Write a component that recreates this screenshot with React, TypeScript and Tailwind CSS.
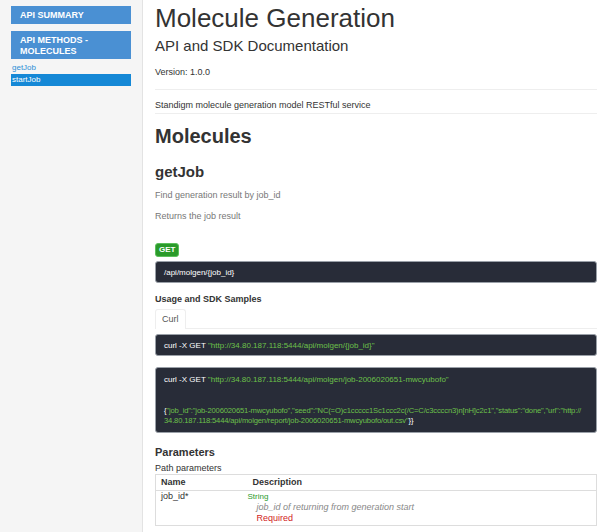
import React from "react";

const font = { fontFamily: '"Liberation Sans", Arial, Helvetica, sans-serif' };

function Sidebar() {
  return (
    <div className="w-[143px] shrink-0 bg-[#f5f5f5] border-r border-[#e3e3e3] pt-[6px] px-[11px]">
      <div className="bg-[#4a90d3] text-white font-bold text-[9px] leading-[11px] px-[9px] py-[4px] h-[18px] flex items-center">
        API SUMMARY
      </div>
      <div className="mt-[7px] bg-[#4a90d3] text-white font-bold text-[9px] leading-[11px] px-[9px] pt-[4px] pb-[3px] h-[28px]">
        API METHODS -<br />
        MOLECULES
      </div>
      <div className="mt-[3px] text-[#2d8fd5] text-[8px] leading-[10px] px-[1px] py-[1px]">getJob</div>
      <div className="bg-[#1588d6] text-white text-[8px] leading-[10px] px-[1px] py-[1px]">startJob</div>
    </div>
  );
}

function CodeBox({ children, className = "" }: { children: React.ReactNode; className?: string }) {
  return (
    <div
      className={
        "bg-[#282c38] rounded-[3px] border border-[#9aa0a8] text-white text-[8px] leading-[11px] px-[8px] " +
        className
      }
    >
      {children}
    </div>
  );
}

export default function App() {
  return (
    <div style={font} className="flex w-[607px] h-[532px] bg-white overflow-hidden text-[#333]">
      <Sidebar />
      <div className="flex-1 min-w-0 pl-[12px] pr-[10px]">
        <h1 className="text-[26px] leading-[30px] mt-[3px] text-[#333]">Molecule Generation</h1>
        <h2 className="text-[15px] leading-[18px] mt-[4px] text-[#333]">API and SDK Documentation</h2>
        <div className="text-[9px] mt-[11px] leading-[12px]">Version: 1.0.0</div>
        <hr className="mt-[11px] border-[#eee]" />
        <div className="text-[9px] mt-[9px] leading-[12px]">Standigm molecule generation model RESTful service</div>
        <hr className="mt-[2px] border-[#eee]" />
        <h2 className="text-[20px] font-bold leading-[24px] mt-[10px]">Molecules</h2>
        <h3 className="text-[15px] font-bold leading-[18px] mt-[15px]">getJob</h3>
        <div className="text-[9px] text-[#777] mt-[8px] leading-[12px]">Find generation result by job_id</div>
        <div className="text-[9px] text-[#777] mt-[9px] leading-[12px]">Returns the job result</div>

        <div className="mt-[21px] inline-block bg-[#2a9a2a] text-white font-bold text-[8px] leading-[10px] px-[3px] py-[1px] rounded-[3px] border border-[#5bbf5b]">
          GET
        </div>
        <CodeBox className="mt-[2px] h-[22px] flex items-center">/api/molgen/{"{job_id}"}</CodeBox>

        <div className="font-bold text-[9px] leading-[12px] mt-[10px]">Usage and SDK Samples</div>
        <div className="mt-[4px] border-b border-[#eee] flex">
          <div className="text-[9px] text-[#555] px-[6px] h-[20px] flex items-center border border-b-0 border-[#eee] rounded-t-[3px] -mb-px bg-white">
            Curl
          </div>
        </div>
        <CodeBox className="mt-[5px] h-[22px] flex items-center">
          <span>curl -X GET&nbsp;</span>
          <span className="text-[#6cc04a]">"http://34.80.187.118:5444/api/molgen/{"{job_id}"}"</span>
        </CodeBox>
        <CodeBox className="mt-[11px] pt-[6px] pb-[6px]">
          <div>
            curl -X GET <span className="text-[#6cc04a]">"http://34.80.187.118:5444/api/molgen/job-2006020651-mwcyubofo"</span>
          </div>
          <div className="h-[21px]" />
          <div className="text-[#6cc04a] whitespace-nowrap text-[7.6px] leading-[10px] tracking-[-0.15px]">
            <div>
              <span className="text-white">{"{"}</span>
              "job_id":"job-2006020651-mwcyubofo","seed":"NC(=O)c1ccccc1Sc1ccc2c(/C=C/c3ccccn3)n[nH]c2c1","status":"done","url":"http://
            </div>
            <div>
              34.80.187.118:5444/api/molgen/report/job-2006020651-mwcyubofo/out.csv"
              <span className="text-white">{"}}"}</span>
            </div>
          </div>
        </CodeBox>

        <div className="font-bold text-[11px] leading-[14px] mt-[12px]">Parameters</div>
        <div className="text-[9px] leading-[12px] mt-[3px]">Path parameters</div>
        <table className="w-full border border-[#ddd] text-[9px] leading-[11px] border-collapse">
          <thead>
            <tr className="border-b border-[#ddd]">
              <th className="text-left font-bold px-[5px] py-[2px] w-[92px]">Name</th>
              <th className="text-left font-bold px-[5px] py-[2px]">Description</th>
            </tr>
          </thead>
          <tbody>
            <tr>
              <td className="align-top px-[5px] pt-0 pb-[1px]">job_id*</td>
              <td className="align-top px-0 pt-[1px] pb-[1px]">
                <div className="text-[#2a9a2a] text-[8px] leading-[10px]">String</div>
                <div className="text-[#888] italic pl-[9px] leading-[11px]">job_id of returning from generation start</div>
                <div className="text-[#d12222] pl-[9px] leading-[11px]">Required</div>
              </td>
            </tr>
          </tbody>
        </table>
      </div>
    </div>
  );
}
